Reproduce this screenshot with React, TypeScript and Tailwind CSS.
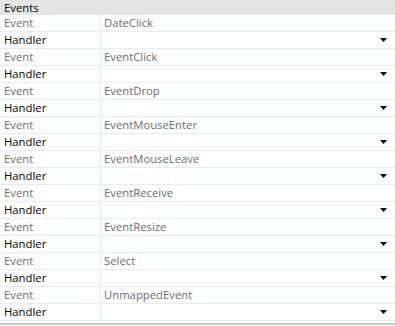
const events = [
  "DateClick",
  "EventClick",
  "EventDrop",
  "EventMouseEnter",
  "EventMouseLeave",
  "EventReceive",
  "EventResize",
  "Select",
  "UnmappedEvent",
];

const Caret = () => (
  <svg width="7" height="4" viewBox="0 0 7 4" className="mr-[8px]">
    <path d="M0 0h7L3.5 4z" fill="#000" />
  </svg>
);

const Row = ({ label, value, muted, dropdown }: { label: string; value?: string; muted?: boolean; dropdown?: boolean }) => (
  <div className="flex h-[17px] border-b border-[#e3edf7]">
    <div className={`w-[101px] pl-[4px] border-r border-[#e3edf7] leading-[16px] ${muted ? "text-[#6d6d6d]" : "text-black"}`}>
      {label}
    </div>
    <div className="flex-1 flex items-center justify-between pl-[3px] leading-[16px] text-[#6d6d6d]">
      <span>{value}</span>
      {dropdown && <Caret />}
    </div>
  </div>
);

export default function App() {
  return (
    <div className="w-[395px] h-[326px] bg-white text-[11.3px] font-['Open_Sans','Liberation_Sans',sans-serif] overflow-hidden">
      <div className="h-[15px] bg-[#e4e4e4] pl-[4px] leading-[15px] text-black">Events</div>
      {events.map((e) => (
        <div key={e}>
          <Row label="Event" value={e} muted />
          <Row label="Handler" dropdown />
        </div>
      ))}
      <div className="mt-[2px] h-[2px] bg-[#c8c8c8]" />
    </div>
  );
}
